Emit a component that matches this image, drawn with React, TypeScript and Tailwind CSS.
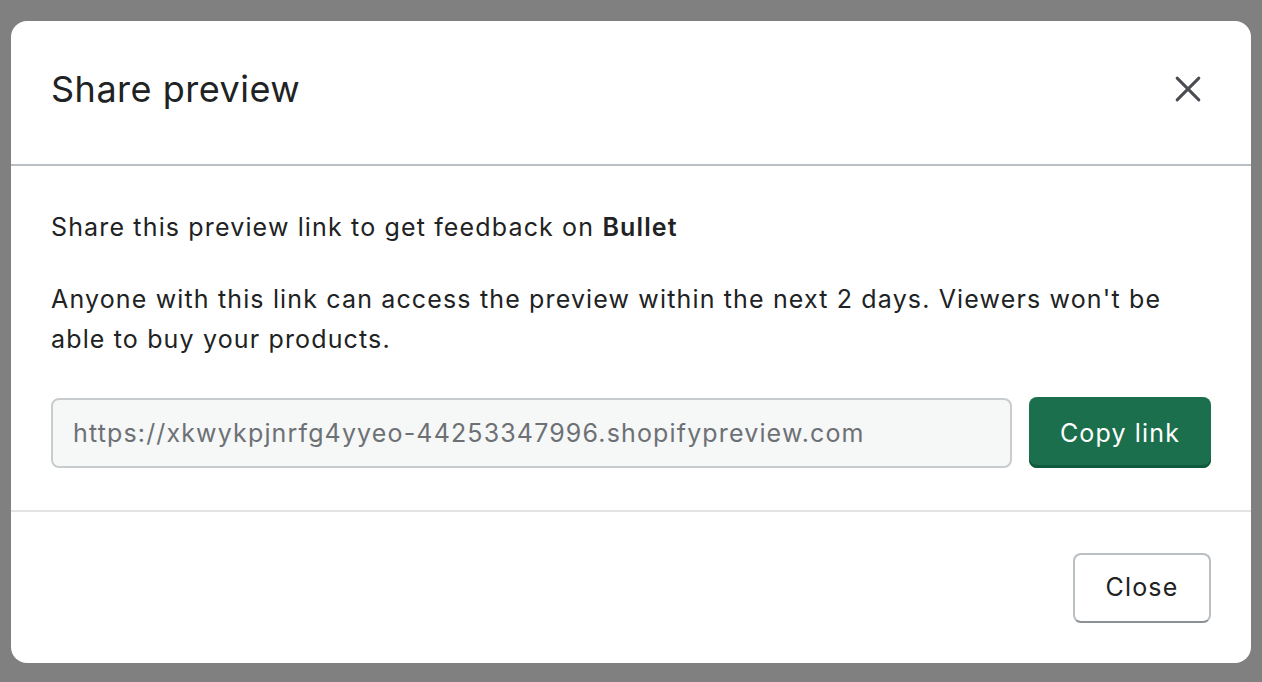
import React from 'react';

export default function App() {
  return (
    <div
      className="min-h-screen w-full bg-[#808080] px-[11px] pt-[21px] pb-[19px]"
      style={{ fontFamily: 'Inter, "Noto Sans", sans-serif' }}
    >
      <div className="flex flex-col overflow-hidden rounded-[16px] bg-white text-[#202223]">
        {/* Header */}
        <div className="flex h-[145px] items-center justify-between border-b-2 border-[#babfc3] pb-[8px] pl-[40px] pr-[50px]">
          <h2 className="text-[36px] font-normal leading-none tracking-[0.5px]">Share preview</h2>
          <button aria-label="Close" className="flex h-[26px] w-[26px] items-center justify-center text-[#4a4d51]">
            <svg viewBox="0 0 24 24" width="26" height="26" fill="none" stroke="currentColor" strokeWidth="2.8" strokeLinecap="round">
              <path d="M2 2L22 22M22 2L2 22" />
            </svg>
          </button>
        </div>

        {/* Body */}
        <div className="flex flex-col border-b-2 border-[#e1e3e5] px-[40px] pt-[41px] pb-[42px] text-[25px] leading-[40px] tracking-[1.15px]">
          <p>
            Share this preview link to get feedback on <span className="font-semibold">Bullet</span>
          </p>
          <p className="mt-[32px]">
            Anyone with this link can access the preview within the next 2 days. Viewers won't be able to buy your products.
          </p>
          <div className="mt-[38px] flex items-center gap-[17px]">
            <div className="flex h-[70px] flex-1 items-center rounded-[8px] border-2 border-[#c9cccf] bg-[#f6f7f7] px-[20px] text-[#6d7175]">
              https://xkwykpjnrfg4yyeo-44253347996.shopifypreview.com
            </div>
            <button className="h-[71px] w-[182px] rounded-[8px] bg-[#1b6f4d] text-white shadow-[inset_0_-3px_0_#0f5a3c]">
              Copy link
            </button>
          </div>
        </div>

        {/* Footer */}
        <div className="flex justify-end px-[40px] pt-[41px] pb-[40px]">
          <button className="h-[70px] w-[138px] rounded-[8px] border-2 border-[#babfc3] border-b-[#8c9196] bg-white text-[25px] tracking-[1.15px] text-[#202223]">
            Close
          </button>
        </div>
      </div>
    </div>
  );
}
